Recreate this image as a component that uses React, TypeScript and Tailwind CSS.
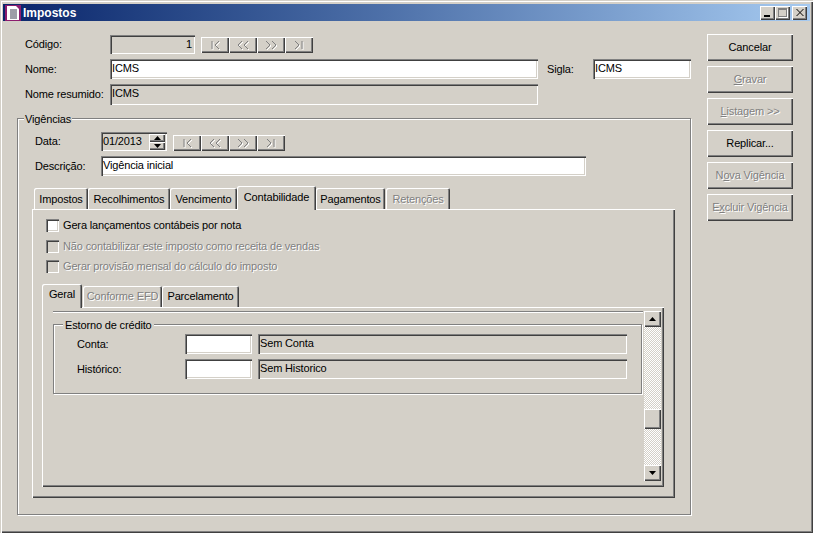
const raised = 'shadow-[inset_1px_1px_0_#fff,inset_-1px_-1px_0_#404040,inset_-2px_-2px_0_#808080]';
const sunken = 'shadow-[inset_1px_1px_0_#808080,inset_2px_2px_0_#404040,inset_-1px_-1px_0_#fff,inset_-2px_-2px_0_#d4d0c8]';
const etched = 'border border-[#808080] shadow-[inset_1px_1px_0_#fff,1px_1px_0_#fff]';
const off = 'text-[#808080] [text-shadow:1px_1px_0_#fff]';

function Field({ text, className, white, right }: { text?: string; className: string; white?: boolean; right?: boolean }) {
  return (
    <div className={`${sunken} ${className} ${white ? 'bg-white' : ''} ${right ? 'text-right pr-[3px]' : 'pl-[2px]'} pt-[2px] leading-[14px] text-black shrink-0`}>
      {text}
    </div>
  );
}

function NavButtons() {
  const glyphs = ['M11 4v8M18 4l-4 4 4 4', 'M13 4l-4 4 4 4M19 4l-4 4 4 4', 'M9 4l4 4-4 4M15 4l4 4-4 4', 'M10 4l4 4-4 4M17 4v8'];
  return (
    <div className="flex">
      {glyphs.map((d) => (
        <div key={d} className={`w-[28px] h-[16px] ${raised}`}>
          <svg width="28" height="16" fill="none">
            <path d={d} stroke="#fff" transform="translate(1 1)" />
            <path d={d} stroke="#808080" />
          </svg>
        </div>
      ))}
    </div>
  );
}

function ActionButton({ children, disabled }: { children: React.ReactNode; disabled?: boolean }) {
  return (
    <div className={`w-[86px] h-[27px] flex items-center justify-center ${raised} ${disabled ? off : 'text-black'}`}>
      {children}
    </div>
  );
}

function Tab({ label, width, active, disabled }: { label: string; width: string; active?: boolean; disabled?: boolean }) {
  const base = active
    ? 'h-[24px] -mb-[1px] pb-[3px] relative z-10 bg-[#d4d0c8] shadow-[inset_1px_1px_0_#fff,inset_-1px_0_0_#404040,inset_-2px_0_0_#808080]'
    : 'h-[21px] shadow-[inset_1px_1px_0_#fff,inset_-1px_0_0_#404040,inset_-2px_0_0_#808080]';
  return (
    <div className={`${width} ${base} rounded-t-[2px] flex items-center justify-center shrink-0 ${disabled ? off : 'text-black'}`}>
      {label}
    </div>
  );
}

function Check({ label, disabled }: { label: string; disabled?: boolean }) {
  return (
    <div className="flex items-center h-[13px]">
      <div className={`w-[13px] h-[13px] ${sunken} ${disabled ? '' : 'bg-white'}`} />
      <span className={`ml-[4px] ${disabled ? off : 'text-black'}`}>{label}</span>
    </div>
  );
}

function Arrow({ up }: { up?: boolean }) {
  return (
    <svg width="7" height="4" viewBox="0 0 7 4">
      <path d={up ? 'M3.5 0L7 4H0z' : 'M0 0h7L3.5 4z'} fill="#000" />
    </svg>
  );
}

export default function App() {
  return (
    <div
      className="w-[813px] h-[533px] overflow-hidden bg-[#d4d0c8] px-[3px] pt-[4px] text-[11px] tracking-[-0.15px] whitespace-nowrap shadow-[inset_1px_1px_0_#d4d0c8,inset_2px_2px_0_#fff,inset_-1px_-1px_0_#404040,inset_-2px_-2px_0_#808080]"
      style={{ fontFamily: '"Liberation Sans", Arial, sans-serif' }}
    >
      {/* title bar */}
      <div className="h-[17px] flex items-center bg-gradient-to-r from-[#0a246a] to-[#a6caf0] pl-[2px] pr-[3px]">
        <svg width="16" height="16" viewBox="0 0 16 16" className="shrink-0">
          <rect width="16" height="16" fill="#8c1c6e" />
          <path d="M2 1h9l3 3v11H2z" fill="#fff" />
          <path d="M5 5h7M5 7h7M5 9h7M5 11h7M5 13h7" stroke="#3c3c50" />
        </svg>
        <span className="ml-[2px] text-white font-bold text-[12px] tracking-normal">Impostos</span>
        <div className="ml-auto flex">
          <div className={`w-[15px] h-[14px] bg-[#d4d0c8] ${raised} flex items-end pl-[4px] pb-[3px]`}>
            <div className="w-[6px] h-[2px] bg-black" />
          </div>
          <div className={`w-[15px] h-[14px] bg-[#d4d0c8] ${raised} flex items-center justify-center`}>
            <div className="w-[9px] h-[9px] border border-[#808080] border-t-2 shadow-[1px_1px_0_#fff]" />
          </div>
          <div className={`ml-[2px] w-[15px] h-[14px] bg-[#d4d0c8] ${raised} flex items-center justify-center`}>
            <svg width="8" height="7" viewBox="0 0 8 7">
              <path d="M0 0l7 7h1L1 0zM7 0L0 7h1l7-7z" fill="#000" />
            </svg>
          </div>
        </div>
      </div>

      <div className="flex">
        {/* left column */}
        <div className="w-[704px]">
          <div className="pl-[22px] pt-[14px]">
            <div className="flex items-center h-[19px]">
              <span className="w-[85px]">Código:</span>
              <Field text="1" className="w-[85px] h-[19px]" right />
              <div className="ml-[6px]">
                <NavButtons />
              </div>
            </div>
            <div className="flex items-center h-[20px] mt-[5px]">
              <span className="w-[85px]">Nome:</span>
              <Field text="ICMS" className="w-[428px] h-[20px]" white />
              <span className="ml-[9px] w-[46px]">Sigla:</span>
              <Field text="ICMS" className="w-[98px] h-[20px]" white />
            </div>
            <div className="flex items-center h-[21px] mt-[5px]">
              <span className="w-[85px]">Nome resumido:</span>
              <Field text="ICMS" className="w-[428px] h-[21px]" />
            </div>
          </div>

          {/* Vigências */}
          <div className={`relative ml-[14px] mt-[13px] w-[674px] h-[397px] ${etched} pl-[17px] pt-[13px]`}>
            <span className="absolute left-[6px] -top-[8px] px-[1px] bg-[#d4d0c8]">Vigências</span>
            <div className="flex items-center h-[19px]">
              <span className="w-[66px]">Data:</span>
              <div className={`w-[66px] h-[19px] shrink-0 flex justify-between pl-[2px] pt-[2px] leading-[14px] ${sunken}`}>
                <span>01/2013</span>
                <div className="flex flex-col mr-[2px]">
                  <div className={`w-[16px] h-[8px] ${raised} flex items-center justify-center`}>
                    <Arrow up />
                  </div>
                  <div className={`w-[16px] h-[8px] ${raised} flex items-center justify-center`}>
                    <Arrow />
                  </div>
                </div>
              </div>
              <div className="ml-[6px] mt-[3px]">
                <NavButtons />
              </div>
            </div>
            <div className="flex items-center h-[20px] mt-[5px]">
              <span className="w-[66px]">Descrição:</span>
              <Field text="Vigência inicial" className="w-[485px] h-[20px]" white />
            </div>

            {/* outer tabs */}
            <div className="flex items-end h-[23px] mt-[10px] -ml-[3px] pl-[2px]">
              <Tab label="Impostos" width="w-[54px] pt-[2px]" />
              <Tab label="Recolhimentos" width="w-[82px] pt-[2px]" />
              <Tab label="Vencimento" width="w-[67px] pt-[2px]" />
              <Tab label="Contabilidade" width="w-[79px] pt-[2px]" active />
              <Tab label="Pagamentos" width="w-[69px] pt-[2px]" />
              <Tab label="Retenções" width="w-[64px] ml-[1px] pt-[2px]" disabled />
            </div>
            <div className={`-ml-[3px] w-[643px] h-[289px] ${raised} pl-[14px] pt-[10px]`}>
              <Check label="Gera lançamentos contábeis por nota" />
              <div className="mt-[8px]">
                <Check label="Não contabilizar este imposto como receita de vendas" disabled />
              </div>
              <div className="mt-[7px]">
                <Check label="Gerar provisão mensal do cálculo do imposto" disabled />
              </div>

              {/* inner tabs */}
              <div className="flex items-end h-[24px] mt-[10px] -ml-[4px]">
                <Tab label="Geral" width="w-[40px]" active />
                <Tab label="Conforme EFD" width="w-[79px] ml-[1px]" disabled />
                <Tab label="Parcelamento" width="w-[77px]" />
              </div>
              <div className={`-ml-[4px] w-[622px] h-[180px] ${raised} flex pl-[11px] pt-[4px]`}>
                <div className="w-[591px]">
                  <div className="h-[1px] w-[590px] bg-[#808080] shadow-[0_1px_0_#fff]" />
                  <div className={`relative mt-[12px] w-[589px] h-[70px] ${etched} pl-[23px] pt-[9px]`}>
                    <span className="absolute left-[9px] -top-[8px] px-[2px] bg-[#d4d0c8]">Estorno de crédito</span>
                    <div className="flex items-center h-[20px]">
                      <span className="w-[108px]">Conta:</span>
                      <Field className="w-[67px] h-[20px]" white />
                      <Field text="Sem Conta" className="ml-[6px] w-[369px] h-[20px]" />
                    </div>
                    <div className="flex items-center h-[20px] mt-[5px]">
                      <span className="w-[108px]">Histórico:</span>
                      <Field className="w-[67px] h-[20px]" white />
                      <Field text="Sem Historico" className="ml-[6px] w-[369px] h-[20px]" />
                    </div>
                  </div>
                </div>

                {/* scrollbar */}
                <div className="w-[17px] h-[170px] flex flex-col bg-[conic-gradient(#fff_25%,#d4d0c8_0_50%,#fff_0_75%,#d4d0c8_0)] bg-[length:2px_2px]">
                  <div className={`w-[17px] h-[16px] bg-[#d4d0c8] ${raised} flex items-center justify-center`}>
                    <Arrow up />
                  </div>
                  <div className={`mt-[82px] w-[17px] h-[20px] bg-[#d4d0c8] ${raised}`} />
                  <div className={`mt-auto w-[17px] h-[16px] bg-[#d4d0c8] ${raised} flex items-center justify-center`}>
                    <Arrow />
                  </div>
                </div>
              </div>
            </div>
          </div>
        </div>

        {/* right column */}
        <div className="pt-[13px] flex flex-col gap-[5px]">
          <ActionButton>Cancelar</ActionButton>
          <ActionButton disabled><span><u>G</u>ravar</span></ActionButton>
          <ActionButton disabled><span><u>L</u>istagem &gt;&gt;</span></ActionButton>
          <ActionButton>Replicar...</ActionButton>
          <ActionButton disabled><span>N<u>o</u>va Vigência</span></ActionButton>
          <ActionButton disabled><span>E<u>x</u>cluir Vigência</span></ActionButton>
        </div>
      </div>
    </div>
  );
}
